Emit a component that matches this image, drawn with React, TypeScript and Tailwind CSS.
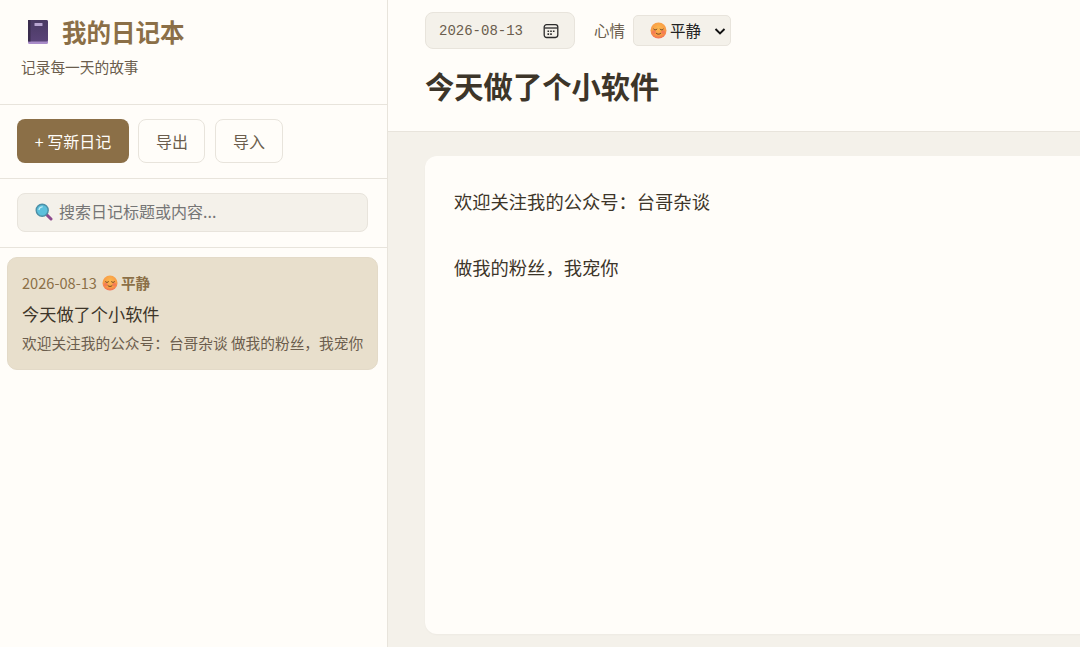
import React from 'react';

const CalmFace = ({ size = 16 }: { size?: number }) => (
  <svg width={size} height={size} viewBox="0 0 32 32" className="shrink-0">
    <defs>
      <radialGradient id="calmFace" cx="50%" cy="35%" r="70%">
        <stop offset="0%" stopColor="#fbb84e" />
        <stop offset="65%" stopColor="#f99a45" />
        <stop offset="100%" stopColor="#f0655a" />
      </radialGradient>
    </defs>
    <circle cx="16" cy="16" r="15" fill="url(#calmFace)" />
    <circle cx="7.500" cy="19" r="3.600" fill="#f2705e" opacity="0.75" />
    <circle cx="24.500" cy="19" r="3.600" fill="#f2705e" opacity="0.75" />
    <path d="M7 13.500c1.500 1.800 4.500 1.800 6 0M19 13.500c1.500 1.800 4.500 1.800 6 0" stroke="#5b3a20" strokeWidth="1.700" fill="none" strokeLinecap="round" />
    <path d="M12 21.500c2 2 6 2 8 0" stroke="#5b3a20" strokeWidth="1.700" fill="none" strokeLinecap="round" />
  </svg>
);

const NotebookIcon = () => (
  <svg width="22" height="26" viewBox="0 0 22 26" className="shrink-0">
    <defs>
      <linearGradient id="bookCover" x1="0" y1="0" x2="0" y2="1">
        <stop offset="0%" stopColor="#4a3a63" />
        <stop offset="100%" stopColor="#5a4478" />
      </linearGradient>
    </defs>
    <rect x="1" y="1" width="20" height="24" rx="1.500" fill="#a98cc9" />
    <rect x="1" y="1" width="20" height="21.500" rx="1.500" fill="url(#bookCover)" />
    <rect x="1" y="1" width="2.500" height="21.500" fill="#3a2d4e" />
    <rect x="7.500" y="4" width="8" height="3" rx="0.500" fill="#b9a6d1" />
  </svg>
);

const SearchIcon = () => (
  <svg width="18" height="18" viewBox="0 0 18 18" className="shrink-0">
    <path d="M11 11l5 5" stroke="#8e4a8e" strokeWidth="3" strokeLinecap="round" />
    <circle cx="7.200" cy="7.200" r="6" fill="#5cc0dc" stroke="#4d8fa6" strokeWidth="1.400" />
    <path d="M4 6.500c.5-1.600 1.700-2.500 3.200-2.600" stroke="#c4ecf5" strokeWidth="1.300" fill="none" strokeLinecap="round" />
  </svg>
);

const CalendarIcon = () => (
  <svg width="16" height="16" viewBox="0 0 16 16" fill="none" className="shrink-0">
    <rect x="1.200" y="1.700" width="13.600" height="12.800" rx="2.400" stroke="#2b2b2b" strokeWidth="1.300" />
    <path d="M1.500 5h13" stroke="#2b2b2b" strokeWidth="1.300" />
    <path d="M4.500 7.500h1.600v1.600H4.500zM7.200 7.500h1.600v1.600H7.200zM9.900 7.500h1.600v1.600H9.900zM4.500 10.300h1.600v1.600H4.500zM7.200 10.300h1.600v1.600H7.200z" fill="#2b2b2b" />
  </svg>
);

const App: React.FC = () => {
  return (
    <div className="flex w-[1080px] h-[647px] overflow-hidden bg-[#f4f1ea] text-[#3d3529] font-['Noto_Sans_CJK_SC','Noto_Sans',sans-serif]">
      <aside className="flex flex-col w-[388px] shrink-0 bg-[#fffdf9] border-r border-[#e8e4dc]">
        <div className="h-[105px] pl-[22px] pt-[13px] border-b border-[#e8e4dc]">
          <h1 className="flex items-center gap-[13px] pl-[5px] text-[24.500px] leading-[38px] font-bold text-[#8b6f47]">
            <NotebookIcon />
            我的日记本
          </h1>
          <p className="mt-[6px] -ml-[1px] text-[14.700px] leading-5 text-[#6b5d4d]">记录每一天的故事</p>
        </div>
        <div className="flex gap-[10px] h-[74px] px-[17px] pt-[14px] border-b border-[#e8e4dc]">
          <button className="w-[112px] h-[44px] rounded-lg bg-[#8b6f47] text-base text-[#fffdf9]">+ 写新日记</button>
          <button className="w-[67px] -ml-px pl-[1px] h-[44px] rounded-lg border border-[#e8e4dc] text-base text-[#6b5d4d]">导出</button>
          <button className="w-[68px] h-[44px] rounded-lg border border-[#e8e4dc] text-base text-[#6b5d4d]">导入</button>
        </div>
        <div className="h-[69px] px-[17px] pt-[14px] border-b border-[#e8e4dc]">
          <div className="flex items-center gap-[6px] w-[351px] h-[39px] pl-[17px] pb-[2px] rounded-lg border border-[#e8e4dc] bg-[#f4f1ea] text-base text-[#757575]">
            <SearchIcon />
            <span className="-mt-[1px]">搜索日记标题或内容...</span>
          </div>
        </div>
        <div className="pl-[7px] pt-[9px]">
          <div className="h-[113px] w-[371px] pl-[14px] pt-[15px] rounded-[10px] border border-[#e3dac8] bg-[#e8dfcc]">
            <div className="flex items-center gap-[5px] text-[14.600px] leading-5 text-[#8b6f47]">
              2026-08-13
              <span className="flex items-center gap-[3px] font-bold">
                <CalmFace size={16} />
                平静
              </span>
            </div>
            <div className="mt-[9px] text-[17.200px] leading-6 text-[#3d3529]">今天做了个小软件</div>
            <div className="mt-[7px] text-[14.700px] leading-5 text-[#6b5d4d] whitespace-nowrap">欢迎关注我的公众号：台哥杂谈 做我的粉丝，我宠你</div>
          </div>
        </div>
      </aside>
      <main className="flex flex-col flex-1 min-w-0">
        <header className="h-[132px] shrink-0 pl-[37px] pt-[12px] bg-[#fffdf9] border-b border-[#e8e4dc]">
          <div className="flex items-center gap-[19px]">
            <div className="flex items-center justify-between w-[150px] h-[37px] pl-[13px] pr-[15px] rounded-lg border border-[#e8e4dc] bg-[#f4f1ea] font-['Liberation_Mono',monospace] text-sm text-[#6b5d4d]">
              2026-08-13
              <CalendarIcon />
            </div>
            <div className="flex items-center gap-[8px]">
              <span className="text-[15.500px] text-[#6b5d4d]">心情</span>
              <div className="flex items-center w-[98px] h-[31px] pl-[16px] rounded-[5px] border border-[#e8e4dc] bg-[#f4f1ea] text-[15.500px] text-[#222222]">
                <CalmFace size={17} />
                <span className="ml-[3px]">平静</span>
                <svg width="12" height="12" viewBox="0 0 12 12" fill="none" className="ml-[13px]">
                  <path d="M1.500 4l4.500 4.500L10.500 4" stroke="#111111" strokeWidth="1.900" />
                </svg>
              </div>
            </div>
          </div>
          <h2 className="mt-[14px] text-[29.300px] leading-[44px] font-bold text-[#3d3529]">今天做了个小软件</h2>
        </header>
        <div className="flex-1 pl-[37px] pt-[24px] pb-[13px] overflow-hidden">
          <div className="w-[720px] h-full pl-[29px] pt-[29px] rounded-xl bg-[#fffdf9] text-[18.300px] leading-[33px] text-[#3d3529] shadow-[0_1px_2px_rgba(0,0,0,0.03)]">
            <p>欢迎关注我的公众号：台哥杂谈</p>
            <p className="mt-[33px]">做我的粉丝，我宠你</p>
          </div>
        </div>
      </main>
    </div>
  );
};

export default App;
